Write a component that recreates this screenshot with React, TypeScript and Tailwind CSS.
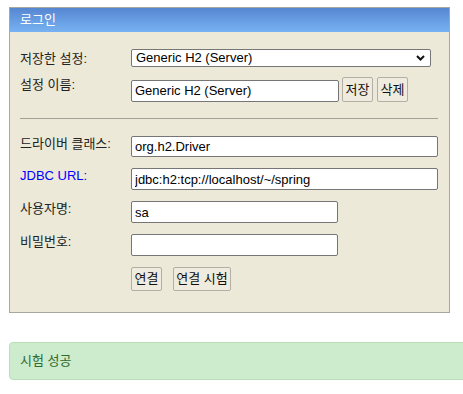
const font = { fontFamily: '"Liberation Sans", "Noto Sans CJK KR", sans-serif' };

const Label = ({ children, blue }: { children: React.ReactNode; blue?: boolean }) => (
  <div className={`w-[111px] shrink-0 text-[13px] leading-[15px] ${blue ? 'text-[#0000ff]' : 'text-[#222]'}`}>{children}</div>
);

const Field = ({ value, w, h }: { value: string; w: string; h: string }) => (
  <input
    readOnly
    value={value}
    className={`${w} ${h} border border-[#767676] rounded-[2px] bg-white px-[3px] text-[13px] text-black outline-none`}
    style={font}
  />
);

const Btn = ({ children, w, h }: { children: React.ReactNode; w: string; h: string }) => (
  <button
    className={`${w} ${h} border border-[#b3afa4] rounded-[2px] bg-[#efebde] text-[13px] text-[#111] flex items-center justify-center`}
    style={font}
  >
    {children}
  </button>
);

export default function App() {
  return (
    <div className="w-full overflow-hidden bg-white pb-[14px]" style={font}>
      <div className="mt-[7px] ml-[9px] w-[441px] h-[306px] border border-[#a9a79b] bg-[#ece9d8]">
        <div className="h-[24px] bg-gradient-to-b from-[#5687d2] to-[#78b2f2] pl-[10px] text-[13px] leading-[24px] text-white">
          로그인
        </div>
        <div className="pl-[10px] pt-[17px]">
          <div className="flex items-center h-[18px]">
            <Label>저장한 설정:</Label>
            <div className="relative flex h-[18px]">
              <select
                className="appearance-none w-[300px] h-[18px] border border-[#767676] rounded-[2px] bg-white text-[13px] leading-[16px] text-black pl-[4px] outline-none"
                style={font}
                defaultValue="h2"
              >
                <option value="h2">Generic H2 (Server)</option>
              </select>
              <svg
                className="pointer-events-none absolute right-[6px] top-[6px]"
                width="9"
                height="6"
                viewBox="0 0 9 6"
              >
                <path d="M1 1 L4.5 4.5 L8 1" fill="none" stroke="#111" strokeWidth="2" />
              </svg>
            </div>
          </div>
          <div className="flex items-start mt-[10px]">
            <Label>설정 이름:</Label>
            <div className="mt-[1px]">
              <Field value="Generic H2 (Server)" w="w-[208px]" h="h-[22px]" />
            </div>
            <div className="ml-[3px]">
              <Btn w="w-[31px]" h="h-[25px]">저장</Btn>
            </div>
            <div className="ml-[4px]">
              <Btn w="w-[31px]" h="h-[25px]">삭제</Btn>
            </div>
          </div>
          <div className="mt-[16px] w-[418px] h-[1px] bg-[#a3a195]" />
          <div className="flex items-start mt-[17px]">
            <Label>드라이버 클래스:</Label>
            <Field value="org.h2.Driver" w="w-[307px]" h="h-[21px]" />
          </div>
          <div className="flex items-start mt-[11px]">
            <Label blue>JDBC URL:</Label>
            <Field value="jdbc:h2:tcp://localhost/~/spring" w="w-[307px]" h="h-[22px]" />
          </div>
          <div className="flex items-start mt-[11px]">
            <Label>사용자명:</Label>
            <Field value="sa" w="w-[207px]" h="h-[22px]" />
          </div>
          <div className="flex items-start mt-[11px]">
            <Label>비밀번호:</Label>
            <Field value="" w="w-[207px]" h="h-[22px]" />
          </div>
          <div className="flex items-start mt-[11px] pl-[111px] gap-[11px]">
            <Btn w="w-[31px]" h="h-[24px]">연결</Btn>
            <Btn w="w-[58px]" h="h-[24px]">연결 시험</Btn>
          </div>
        </div>
      </div>
      <div className="mt-[29px] ml-[9px] w-[480px] h-[38px] rounded-[4px] border border-[#b9dfb9] bg-[#cdeccd] pl-[10px] text-[13px] leading-[36px] text-[#2f6a2f]">
        시험 성공
      </div>
    </div>
  );
}
